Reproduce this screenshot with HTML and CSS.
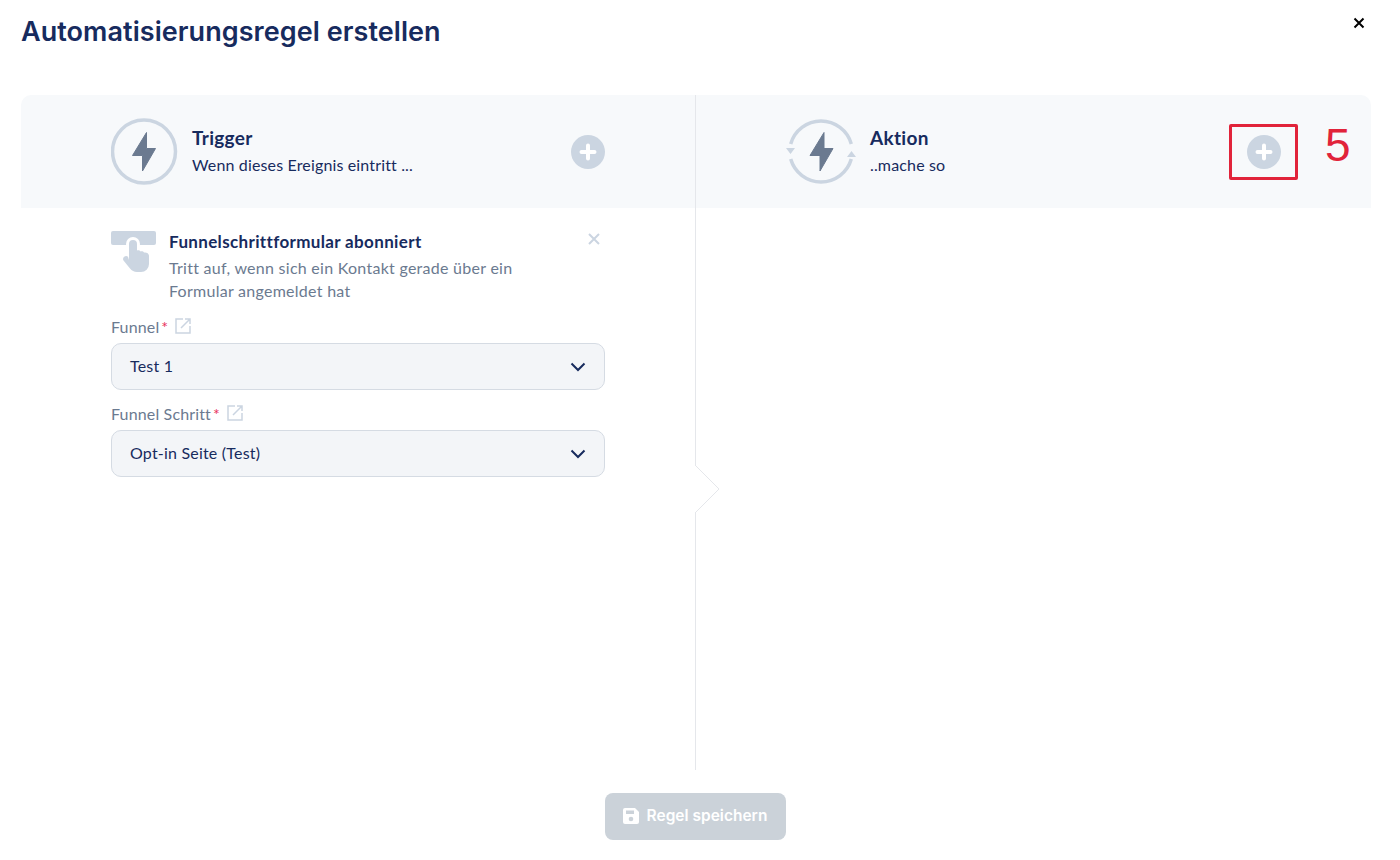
FILE: index.html
```html
<!DOCTYPE html>
<html>
	<head>
		<meta charset="utf-8">
		<title>Automatisierungsregel erstellen</title>
		<link rel="stylesheet" href="styles.css">
	</head>
	<body>
		<div class="modal">
			<div class="modal-head">
				<h1>Automatisierungsregel erstellen</h1>
				<svg class="close" width="12" height="12" viewBox="0 0 12 12"><path d="M1.500 1.500l9 9M10.500 1.500l-9 9" stroke="#000" stroke-width="2" fill="none"/></svg>
			</div>
			<div class="builder">
				<div class="col col-left">
					<div class="band band-left">
						<svg class="band-icon" width="68" height="68" viewBox="0 0 68 68">
							<circle cx="33" cy="33.500" r="31.500" fill="none" stroke="#cbd5e1" stroke-width="3.500"/>
							<path d="M35.500 14.500L21.500 37.500L31.500 37.500L31.500 53L44.500 30.500L35.500 30.500Z" fill="#6b7a90" stroke="#6b7a90" stroke-linejoin="round"/>
						</svg>
						<div class="band-text">
							<h2>Trigger</h2>
							<p>Wenn dieses Ereignis eintritt ...</p>
						</div>
						<svg class="add" width="34" height="34" viewBox="0 0 34 34"><circle cx="17" cy="17" r="17" fill="#cbd5e1"/><path d="M17 10.500v13M10.500 17h13" stroke="#fff" stroke-width="4" stroke-linecap="round"/></svg>
					</div>
					<div class="form">
						<div class="event">
							<svg class="event-icon" width="45" height="42" viewBox="0 0 45 42">
								<rect x="0" y="0" width="45" height="14" rx="2" fill="#cbd5e1"/>
								<circle cx="22" cy="13" r="7" fill="#fff"/>
								<path d="M18 13a4 4 0 0 1 8 0v6.500c1.500-.5 3 0 3.500 1 1.500-.5 3 0 3.500 1 2-.5 5 .5 5 3.500V33a8 8 0 0 1-8 8h-4a9 9 0 0 1-7-3.500l-6.500-8a3 3 0 0 1 4.500-3.800L18 29Z" fill="#cbd5e1"/>
							</svg>
							<div class="event-text">
								<h3>Funnelschrittformular abonniert</h3>
								<p>Tritt auf, wenn sich ein Kontakt gerade über ein Formular angemeldet hat</p>
							</div>
							<svg class="event-x" width="12" height="12" viewBox="0 0 12 12"><path d="M1 1l10 10M11 1L1 11" stroke="#cbd5e1" stroke-width="2" fill="none"/></svg>
						</div>
						<div class="field">
							<label>Funnel<span class="req">*</span>
								<svg class="ext" width="18" height="18" viewBox="0 0 18 18"><path d="M9 2H2v14h14V9M7 11l9-9M11 2h5v5" fill="none" stroke="#cbd5e1" stroke-width="1.500"/></svg>
							</label>
							<div class="select">
								<span>Test 1</span>
								<svg width="16" height="10" viewBox="0 0 16 10"><path d="M1.500 1.500L8 8l6.500-6.500" fill="none" stroke="#172b5e" stroke-width="2"/></svg>
							</div>
						</div>
						<div class="field">
							<label>Funnel Schritt<span class="req">*</span>
								<svg class="ext" width="18" height="18" viewBox="0 0 18 18"><path d="M9 2H2v14h14V9M7 11l9-9M11 2h5v5" fill="none" stroke="#cbd5e1" stroke-width="1.500"/></svg>
							</label>
							<div class="select">
								<span>Opt-in Seite (Test)</span>
								<svg width="16" height="10" viewBox="0 0 16 10"><path d="M1.500 1.500L8 8l6.500-6.500" fill="none" stroke="#172b5e" stroke-width="2"/></svg>
							</div>
						</div>
					</div>
					<svg class="notch" width="25" height="50" viewBox="0 0 25 50"><path d="M0 1L24 25L0 49" fill="#fff" stroke="#e5e7eb"/></svg>
				</div>
				<div class="col col-right">
					<div class="band band-right">
						<svg class="band-icon" width="70" height="68" viewBox="0 0 70 68">
							<path d="M4.700 26A31.500 31.500 0 0 1 65.300 26M65.300 41A31.500 31.500 0 0 1 4.700 41" fill="none" stroke="#cbd5e1" stroke-width="3.500"/>
							<path d="M0 30h9l-4.500 6ZM61 39h9l-4.500-6Z" fill="#cbd5e1"/>
							<path d="M38 14.500L24 37.500L34 37.500L34 53L47 30.500L38 30.500Z" fill="#6b7a90" stroke="#6b7a90" stroke-linejoin="round"/>
						</svg>
						<div class="band-text">
							<h2>Aktion</h2>
							<p>..mache so</p>
						</div>
						<div class="add-wrap">
							<svg class="add" width="34" height="34" viewBox="0 0 34 34"><circle cx="17" cy="17" r="17" fill="#cbd5e1"/><path d="M17 10.500v13M10.500 17h13" stroke="#fff" stroke-width="4" stroke-linecap="round"/></svg>
							<div class="mark"></div>
							<div class="mark-num">5</div>
						</div>
					</div>
				</div>
			</div>
			<div class="foot">
				<button class="save">
					<svg width="16" height="16" viewBox="0 0 16 16"><path d="M2 0h10l4 4v10a2 2 0 0 1-2 2H2a2 2 0 0 1-2-2V2a2 2 0 0 1 2-2Z" fill="#fff"/><rect x="3" y="2.500" width="8" height="3.500" fill="#cbd2d9"/><circle cx="8" cy="11" r="2.300" fill="#cbd2d9"/></svg>
					Regel speichern
				</button>
			</div>
		</div>
	</body>
</html>
```
FILE: styles.css
```css
*{
	padding: 0;
	margin: 0;
	box-sizing: border-box;
}
body{
	background: #fff;
	font-family: "Lato", "Liberation Sans", sans-serif;
	color: #172b5e;
}
.modal{
	width: 1400px;
	height: 860px;
	padding: 0 29px 0 21px;
	display: flex;
	flex-direction: column;
}
.modal-head{
	height: 95px;
	display: flex;
	justify-content: space-between;
	align-items: flex-start;
}
h1{
	font: 600 27px/32px "Inter", "Liberation Sans", sans-serif;
	letter-spacing: .06px;
	padding-top: 16px;
	color: #172b5e;
}
.close{
	margin: 17px 6px 0 0;
}
.builder{
	height: 675px;
	display: flex;
}
.col{
	position: relative;
}
.col-left{
	width: 675px;
	border-right: 1px solid #e5e7eb;
}
.col-right{
	flex: 1;
}
.band{
	height: 113px;
	background: #f7f9fb;
	display: flex;
	align-items: center;
}
.band-left{
	border-radius: 10px 0 0 0;
	padding: 0 90px;
}
.band-right{
	border-radius: 0 10px 0 0;
	padding: 0 90px;
}
.band-text{
	flex: 1;
	margin-left: 13px;
	padding-bottom: 2px;
}
.band-right .band-text{
	margin-left: 14px;
}
h2{
	font-size: 19px;
	line-height: 24px;
	font-weight: 700;
	letter-spacing: .3px;
}
.band-text p{
	font-size: 16px;
	line-height: 20px;
	margin-top: 5px;
	letter-spacing: .15px;
}
.add{
	display: block;
}
.add-wrap{
	position: relative;
}
.mark{
	position: absolute;
	left: -18px;
	top: -11px;
	width: 69px;
	height: 56px;
	border: 3px solid #e1233a;
	border-radius: 2px;
}
.mark-num{
	position: absolute;
	left: 78px;
	top: -16px;
	font: 46px/52px "Liberation Sans", sans-serif;
	color: #e1233a;
}
.form{
	padding: 23px 90px 0;
}
.event{
	display: flex;
	position: relative;
}
.event-icon{
	flex: none;
	margin-right: 13px;
}
.event-text{
	width: 380px;
}
h3{
	font-size: 17px;
	line-height: 22px;
	font-weight: 700;
	letter-spacing: .35px;
}
.event-text p{
	font-size: 16px;
	line-height: 23px;
	color: #6b7a90;
	margin-top: 3px;
	letter-spacing: .27px;
}
.event-x{
	position: absolute;
	right: 5px;
	top: 2px;
}
.field{
	margin-top: 12px;
}
.event + .field{
	margin-top: 13px;
}
label{
	display: flex;
	align-items: center;
	height: 24px;
	padding-bottom: 2px;
	font-size: 16px;
	letter-spacing: .15px;
	color: #6b7a90;
}
.req{
	color: #e8315b;
	margin-left: 2px;
}
.ext{
	margin-left: 6px;
}
.select{
	height: 47px;
	margin-top: 4px;
	background: #f3f5f8;
	border: 1px solid #d5dbe3;
	border-radius: 10px;
	padding: 0 18px 3px;
	display: flex;
	align-items: center;
	justify-content: space-between;
	font-size: 16px;
	letter-spacing: .2px;
}
.select svg{
	margin-top: 3px;
}
.notch{
	position: absolute;
	left: 674px;
	top: 369px;
}
.foot{
	flex: 1;
	display: flex;
	justify-content: center;
	padding-top: 23px;
	padding-right: 2px;
}
.save{
	width: 181px;
	height: 47px;
	background: #cbd2d9;
	border: 0;
	border-radius: 8px;
	color: #fff;
	font: 600 15.5px "Inter", "Liberation Sans", sans-serif;
	display: flex;
	align-items: center;
	justify-content: center;
	gap: 8px;
	padding-bottom: 3px;
}
.save svg{
	margin-top: 1px;
}
```
